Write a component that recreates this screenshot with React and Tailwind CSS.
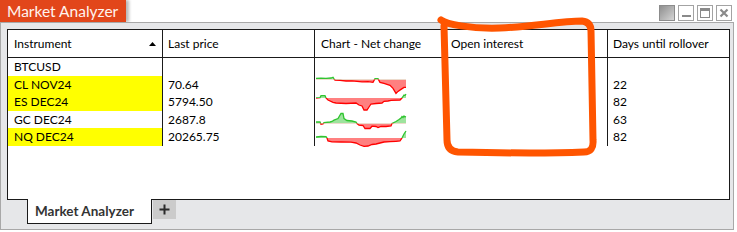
import React from "react"

const rows = [
  { name: "BTCUSD", price: "", days: "", hl: false, spark: null },
  {
    name: "CL NOV24", price: "70.64", days: "22", hl: true,
    spark: {
      base: 3.4,
      pts: [[0,1],[5,1.2],[10,1],[15,1.4],[17,2.2],[18,0.6],[19,-0.8],[24,-1],[30,-1.6],[36,-1.5],[41,-2],[46,-2.5],[52,-2.2],[57,-3],[59,0.7],[62,0.7],[64,-3],[68,-4],[71,-5],[74,-6],[77,-9],[80,-14],[82,-12],[85,-10],[88,-8],[90,-8]],
    },
  },
  {
    name: "ES DEC24", price: "5794.50", days: "82", hl: true,
    spark: {
      base: 5,
      pts: [[0,0],[4,0.3],[5,2.3],[9,2.3],[10,0],[12,-2],[17,-4.3],[20,-5],[30,-5.5],[40,-5],[43,-7],[46,-8],[48,-12],[51,-12],[53,-9],[55,-6],[60,-5.5],[66,-5],[68,-3.3],[72,-3],[75,-2.3],[84,-2],[86,0],[88,3],[89,2.5],[90,4]],
    },
  },
  {
    name: "GC DEC24", price: "2687.8", days: "63", hl: false,
    spark: {
      base: 12.5,
      pts: [[0,1.5],[4,1.5],[5,-0.7],[7,-0.5],[8,1],[14,1.5],[16,2],[18,3.3],[22,5],[25,10],[27,10],[28,5],[31,3],[36,2.5],[40,1.5],[41,0],[43,-1.7],[47,-2],[49,-5],[54,-5],[56,-2.7],[60,-3],[62,-4],[65,-3],[70,-3],[75,-2.5],[76,0],[80,2],[83,4],[85,5.5],[86,7],[87,6],[88,7.5],[89,6.5],[90,7]],
    },
  },
  {
    name: "NQ DEC24", price: "20265.75", days: "82", hl: true,
    spark: {
      base: 10,
      pts: [[0,1],[5,1.5],[10,1.3],[11,0],[12,-3],[16,-3.8],[25,-4],[35,-4.2],[40,-5],[44,-7],[48,-8.3],[52,-8],[56,-6.5],[60,-6],[64,-5],[68,-4],[74,-3.7],[80,-3.3],[84,-3],[86,0],[88,4],[90,7]],
    },
  },
]

function Sparkline({ id, base, pts }) {
  const H = 18
  const line = pts.map(([x, v], i) => `${i ? "L" : "M"}${x},${(base - v).toFixed(2)}`).join(" ")
  const area = `M0,${base} ` + pts.map(([x, v]) => `L${x},${(base - v).toFixed(2)}`).join(" ") + ` L90,${base} Z`
  return (
    <svg width="91" height={H} viewBox={`0 0 91 ${H}`} className="block overflow-visible">
      <defs>
        <clipPath id={`up-${id}`}>
          <rect x="-1" y="-10" width="93" height={base + 10} />
        </clipPath>
        <clipPath id={`dn-${id}`}>
          <rect x="-1" y={base} width="93" height={H} />
        </clipPath>
      </defs>
      <g clipPath={`url(#up-${id})`}>
        <path d={area} fill="#9de39d" />
        <path d={line} fill="none" stroke="#2fc42f" strokeWidth="1.3" />
      </g>
      <g clipPath={`url(#dn-${id})`}>
        <path d={area} fill="#ff8080" />
        <path d={line} fill="none" stroke="#ff0000" strokeWidth="1.3" />
      </g>
    </svg>
  )
}

function WinButtons() {
  return (
    <div className="flex items-start gap-[3px] pr-[2px] pt-[5px]">
      <div className="w-[16px] h-[16px] border border-[#8c8c8c] bg-gradient-to-br from-[#8f8f8f] to-[#d6d6d6]" />
      <div className="w-[16px] h-[16px] border border-[#a3a3a3] bg-white flex items-end justify-center pb-[3px]">
        <div className="w-[9px] h-[2px] bg-[#8a8a8a]" />
      </div>
      <div className="w-[16px] h-[16px] border border-[#a3a3a3] bg-white flex items-center justify-center">
        <div className="w-[10px] h-[10px] border border-[#8a8a8a] border-t-[3px]" />
      </div>
      <div className="w-[16px] h-[16px] border border-[#a3a3a3] bg-white flex items-center justify-center">
        <svg width="10" height="10" viewBox="0 0 10 10">
          <path d="M1.5 1.5 L8.5 8.5 M8.5 1.5 L1.5 8.5" stroke="#8a8a8a" strokeWidth="2.2" />
        </svg>
      </div>
    </div>
  )
}

export default function App() {
  const font = { fontFamily: 'Lato, "Open Sans", sans-serif' }
  return (
    <div className="relative w-[737px] h-[232px] bg-white overflow-hidden" style={font}>
      <div className="w-[734px] flex flex-col">
        {/* title strip */}
        <div className="h-[22px] flex justify-between">
          <div className="h-[22px] bg-[#e2461a] text-[#fff3ee] text-[15.5px] leading-[22px] pl-[7px] pr-[8px] shadow-[3px_0_3px_rgba(0,0,0,0.28)]">
            Market Analyzer
          </div>
          <WinButtons />
        </div>

        {/* window body */}
        <div className="h-[208px] border border-[#a8a8a8] bg-[#e6e7e9] pt-[6px] pl-[6px] pr-[3px] flex flex-col">
          <div className="w-[723px] h-[171px] border border-[#1a1a1a] bg-white text-[12px] text-black">
            {/* header */}
            <div className="flex h-[28px] border-b border-[#1a1a1a]">
              <div className="w-[155px] border-r border-[#1a1a1a] flex items-center justify-between pl-[6px] pr-[6px]">
                <span>Instrument</span>
                <svg width="7" height="4" viewBox="0 0 7 4"><path d="M0 4 L3.5 0 L7 4 Z" fill="#000" /></svg>
              </div>
              <div className="w-[152px] border-r border-[#1a1a1a] flex items-center pl-[5px]">Last price</div>
              <div className="w-[131px] border-r border-[#1a1a1a] flex items-center pl-[6px]">Chart - Net change</div>
              <div className="w-[162px] border-r border-[#1a1a1a] flex items-center pl-[5px]">Open interest</div>
              <div className="w-[121px] flex items-center pl-[5px]">Days until rollover</div>
            </div>

            {/* rows */}
            {rows.map((r, i) => (
              <div key={r.name} className="flex h-[17.6px] leading-[17.6px]">
                <div className={`w-[155px] border-r border-[#1a1a1a] pl-[6px] ${r.hl ? "bg-[#ffff00]" : ""}`}>{r.name}</div>
                <div className="w-[152px] border-r border-[#1a1a1a] pl-[5px]">{r.price}</div>
                <div className="w-[131px] border-r border-[#1a1a1a] pl-[1px]">
                  {r.spark && <Sparkline id={i} base={r.spark.base} pts={r.spark.pts} />}
                </div>
                <div className="w-[162px] border-r border-[#1a1a1a]" />
                <div className="w-[121px] pl-[5px]">{r.days}</div>
              </div>
            ))}
          </div>

          {/* tabs */}
          <div className="flex items-start pl-[20px]">
            <div className="w-[125px] h-[25px] bg-white border border-t-0 border-[#1a1a1a] pl-[7px] text-[13.5px] font-bold text-[#333] leading-[23px] -mt-px pt-px">
              Market Analyzer
            </div>
            <div className="ml-[1px] w-[23px] h-[19px] bg-[#cbcbcb] flex items-center justify-center">
              <svg width="11" height="11" viewBox="0 0 11 11">
                <path d="M5.5 0.5 V10.5 M0.5 5.5 H10.5" stroke="#2b2b2b" strokeWidth="2" />
              </svg>
            </div>
          </div>
        </div>
      </div>

      {/* hand-drawn annotation */}
      <svg className="absolute left-0 top-0 pointer-events-none" width="737" height="232">
        <path
          d="M441 20 C 446 24, 470 29, 500 28 C 530 27, 560 21, 582 21 Q 591 22 591 31 L 593 140 Q 594 152 584 152 C 560 153, 500 153, 458 152 Q 447 151 447 140 L 444 26"
          fill="none"
          stroke="#ff5500"
          strokeWidth="7"
          strokeLinecap="round"
          strokeLinejoin="round"
        />
      </svg>
    </div>
  )
}
